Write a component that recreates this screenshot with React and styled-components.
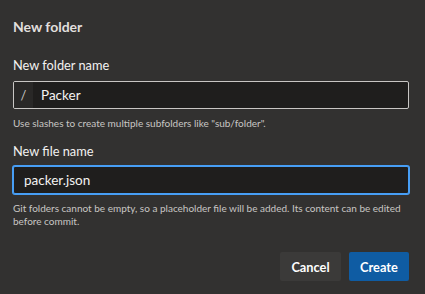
import React from 'react';
import styled, { createGlobalStyle } from 'styled-components';

const GlobalStyle = createGlobalStyle`
  html, body {
    margin: 0;
    padding: 0;
    background: #323130;
  }
  body {
    font-family: Lato, "Open Sans", sans-serif;
  }
`;

const Dialog = styled.div`
  width: 425px;
  height: 294px;
  box-sizing: border-box;
  padding: 17px 16px 13px 13px;
  background: #323130;
  display: flex;
  flex-direction: column;
`;

const Title = styled.h2`
  margin: 0 0 18px;
  font-size: 14px;
  line-height: 20px;
  font-weight: 700;
  color: #e1dfdd;
`;

const Field = styled.div`
  display: flex;
  flex-direction: column;
  margin-top: ${p => p.$top || 0}px;
`;

const Label = styled.label`
  font-size: 12.8px;
  line-height: 20px;
  color: #f3f2f1;
  margin-bottom: ${p => p.$gap}px;
`;

const InputWrap = styled.div`
  display: flex;
  height: 28px;
  box-sizing: border-box;
  border-radius: 2px;
  background: #1f1e1d;
  border: 1px solid ${p => (p.$focused ? '#479ef5' : '#c8c6c4')};
  box-shadow: ${p => (p.$focused ? '0 0 0 1px #479ef5' : 'none')};
  overflow: hidden;
`;

const Prefix = styled.span`
  width: 19px;
  display: flex;
  align-items: center;
  justify-content: center;
  background: #292827;
  color: #c8c6c4;
  font-size: 13px;
`;

const Input = styled.input`
  flex: 1;
  min-width: 0;
  border: none;
  outline: none;
  background: transparent;
  color: #f3f2f1;
  font-family: inherit;
  font-size: 13.5px;
  padding: 0 ${p => p.$pad}px;
  text-decoration: ${p => (p.$misspelled ? 'underline wavy #e81123' : 'none')};
  text-decoration-thickness: 1px;
  text-underline-offset: 3px;
`;

const Help = styled.p`
  margin: 8px 0 0;
  font-size: 10px;
  line-height: 13px;
  color: #c8c6c4;
`;

const Footer = styled.div`
  margin-top: auto;
  display: flex;
  justify-content: flex-end;
  gap: 8px;
`;

const Button = styled.button`
  height: 29px;
  width: ${p => p.$width}px;
  padding: 0;
  border: none;
  border-radius: 2px;
  font-family: inherit;
  font-size: 12.8px;
  font-weight: 700;
  color: #ffffff;
  background: ${p => (p.$primary ? '#0f5ca3' : '#3b3a39')};
  cursor: pointer;
`;

export default function App() {
  return (
    <>
      <GlobalStyle />
      <Dialog>
        <Title>New folder</Title>
        <Field>
          <Label $gap={6}>New folder name</Label>
          <InputWrap>
            <Prefix>/</Prefix>
            <Input $pad={8} defaultValue="Packer" />
          </InputWrap>
          <Help>Use slashes to create multiple subfolders like "sub/folder".</Help>
        </Field>
        <Field $top={11}>
          <Label $gap={5}>New file name</Label>
          <InputWrap $focused>
            <Input $pad={10} $misspelled defaultValue="packer.json" />
          </InputWrap>
          <Help>
            Git folders cannot be empty, so a placeholder file will be added. Its content can be edited before commit.
          </Help>
        </Field>
        <Footer>
          <Button $width={61}>Cancel</Button>
          <Button $primary $width={60}>Create</Button>
        </Footer>
      </Dialog>
    </>
  );
}
